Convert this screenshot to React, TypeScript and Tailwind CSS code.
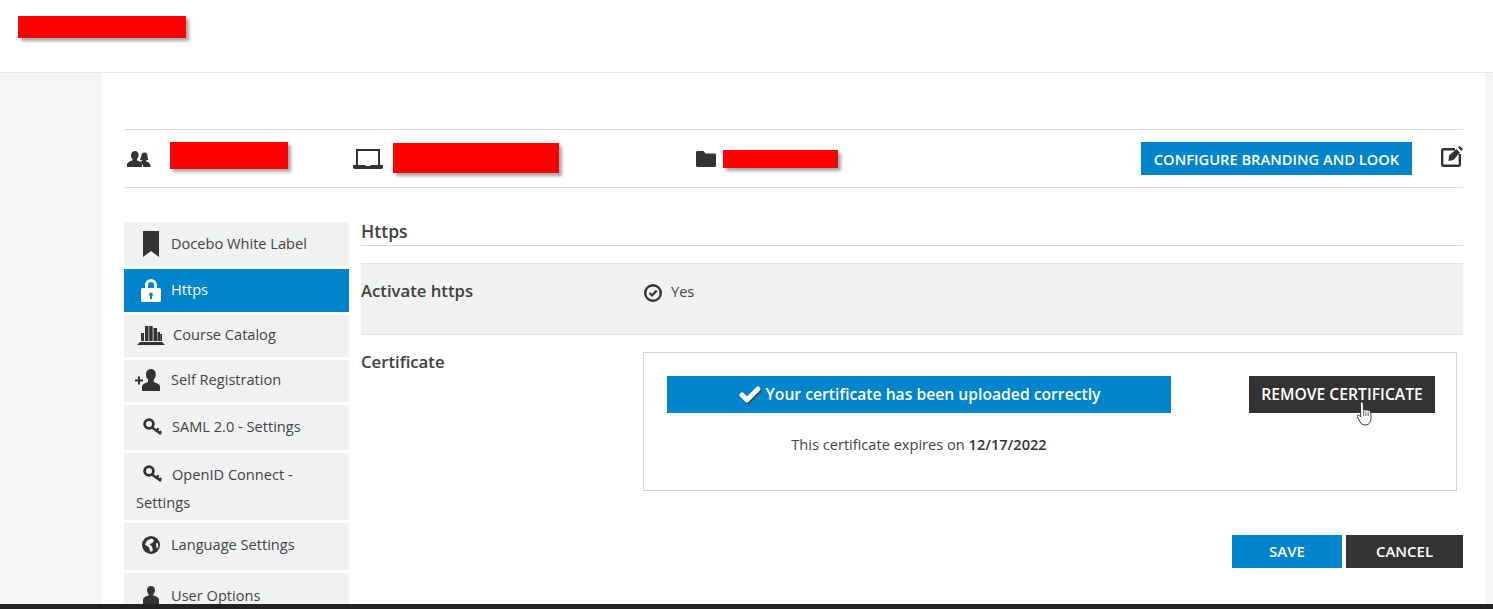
import { Check } from "lucide-react";
import type { ReactNode } from "react";

const Redacted = ({ className }: { className: string }) => (
    <div className={`bg-[#ff0000] shadow-[3px_3px_3px_rgba(0,0,0,0.35)] ${className}`} />
);

const UsersIcon = () => (
    <svg viewBox="0 0 24 16" className="h-[16px] w-[24px] fill-[#333]">
        <path d="M8 0c2.400 0 3.600 1.900 3.600 4.200 0 1.700-.7 3-1.600 3.800v1.400c2.500.7 4.600 1.800 5 3.600v3H0v-3c.4-1.800 2.600-2.900 5.500-3.600V8C4.600 7.200 4 5.900 4 4.200 4 1.900 5.600 0 8 0z" />
        <path d="M17.500 1.500c2 0 3 1.700 3 3.500 0 1.500.4 2.700 1 3.500-.6.500-1.700.8-2.600.9v.9c2 .5 4.500 1.600 4.800 5.700h-7.400c-.3-2.400-1.500-3.800-3.500-4.900.5-.4 1.700-.8 2.500-1v-.7c-.9-.1-2-.4-2.600-.9.800-.8 1.300-2 1.500-3.600.2-1.700 1.300-3.400 3.300-3.400z" />
    </svg>
);

const LaptopIcon = () => (
    <svg viewBox="0 0 30 20" className="h-[20px] w-[30px] fill-[#333]">
        <path d="M3 0h24v16h-2V2H5v14H3z" />
        <path d="M0 16h12l1 1h4l1-1h12v2.500l-1 1.500H1l-1-1.500z" />
    </svg>
);

const FolderIcon = () => (
    <svg viewBox="0 0 20 16" className="h-[16px] w-[20px] fill-[#333]">
        <path d="M1.500 0h6l2 2.500h9c.8 0 1.500.7 1.500 1.500v10.500c0 .8-.7 1.500-1.500 1.500h-17C.7 16 0 15.300 0 14.500v-13C0 .7.700 0 1.500 0z" />
    </svg>
);

const EditIcon = () => (
    <svg viewBox="0 0 22 21" className="h-[21px] w-[22px]">
        <path d="M14 3.200H2.500c-.7 0-1.300.6-1.300 1.300v14c0 .7.600 1.300 1.300 1.300h15c.7 0 1.300-.6 1.300-1.300V8" fill="none" stroke="#333" strokeWidth="2.400" />
        <path d="M8 9.500 15.500 3l3.500 3.500-6.500 7.500-5 1zM17 1.500l1.500-1.500L22 3l-1.500 2z" fill="#333" />
    </svg>
);

const BookmarkIcon = () => (
    <svg viewBox="0 0 16 26" className="h-[26px] w-[16px] fill-[#333]">
        <path d="M0 0h16v26l-8-6-8 6z" />
    </svg>
);

const LockIcon = () => (
    <svg viewBox="0 0 20 24" className="h-[24px] w-[20px]">
        <path d="M4 10V7a6 6 0 0 1 12 0v3h-3V7a3 3 0 0 0-6 0v3z" fill="#fff" />
        <path d="M1.500 10h17c.8 0 1.500.7 1.500 1.500v11c0 .8-.7 1.500-1.500 1.500h-17C.7 24 0 23.300 0 22.500v-11C0 10.700.7 10 1.500 10z" fill="#fff" />
        <path d="M10 14.500a2 2 0 0 1 1 3.700V21H9v-2.800a2 2 0 0 1 1-3.700z" fill="#0084cb" />
    </svg>
);

const BooksIcon = () => (
    <svg viewBox="0 0 28 20" className="h-[20px] w-[28px] fill-[#333]">
        <path d="M0 20l3-3h22l3 3z" />
        <path d="M4 8h3v8H4zM8 1h3.500v15H8zM12.200 1h3.500v15h-3.500zM16.500 3H20v13h-3.500zM20.500 7H23v9h-2.500zM23.200 9h1.800v7h-1.800z" />
    </svg>
);

const AddUserIcon = () => (
    <svg viewBox="0 0 25 22" className="h-[22px] w-[25px] fill-[#333]">
        <path d="M0 10.500h3v-3h2v3h3v2H5v3H3v-3H0z" />
        <path d="M16 0c3 0 4.800 2.300 4.800 5.500 0 2.200-.8 4-2 5v2.500c2.600.8 5.200 1.800 6.200 4V22H7v-5c1-2.200 3.400-3.200 6-4v-2.500c-1.200-1-2-2.800-2-5C11 2.300 13 0 16 0z" />
    </svg>
);

const KeyIcon = () => (
    <svg viewBox="0 0 20 18" className="h-[18px] w-[20px]">
        <circle cx="6" cy="6" r="4.400" fill="none" stroke="#333" strokeWidth="2.800" />
        <path d="M9 9.500l9 6.500M13.500 12.700l2-2.500M16.500 15l1.500-2" fill="none" stroke="#333" strokeWidth="2.400" />
    </svg>
);

const GlobeIcon = () => (
    <svg viewBox="0 0 18 18" className="h-[18px] w-[18px]">
        <circle cx="9" cy="9" r="9" fill="#333" />
        <path d="M5 4.500 9.500 2.500 12 4l-1.500 3-3 1 2.500 2.500 1 4L8.500 16 7 11.500 3 8.500zM14 7l2 .5.300 3.500-1.800 1.500z" fill="#f0f1f1" />
    </svg>
);

const UserIcon = () => (
    <svg viewBox="0 0 16 18" className="h-[18px] w-[16px] fill-[#333]">
        <path d="M8 0c2.500 0 4 1.900 4 4.300 0 1.700-.7 3.100-1.700 4v1.200c2.400.6 5.700 1.600 5.700 4.500v4H0v-4c0-2.900 3.300-3.900 5.700-4.500V8.300c-1-.9-1.700-2.300-1.700-4C4 1.900 5.500 0 8 0z" />
    </svg>
);

const CheckCircleIcon = () => (
    <svg viewBox="0 0 18 18" className="h-[18px] w-[18px]">
        <circle cx="9" cy="9" r="7.800" fill="none" stroke="#333" strokeWidth="2.400" />
        <path d="M5.500 9l2.600 2.500L12.700 6.500" fill="none" stroke="#333" strokeWidth="2.200" />
    </svg>
);

const HandCursor = () => (
    <svg viewBox="0 0 16 25" className="h-[25px] w-[16px]">
        <path
            d="M4 1.500c.8-.8 2-.5 2.200.7l.3 7c.8-.6 1.800-.6 2.300.1.800-.5 1.800-.4 2.300.3.800-.4 1.900-.1 2.200.8.600 2.200 1 5.500.6 8-.4 2.600-1.800 5.400-4.900 5.600-2.900.2-4.700-.9-5.900-3.100-.9-1.600-2.100-3.700-2.900-5.200-.5-1 .9-2.200 2.100-1.200l1.400 1.400L3.400 2.800c0-.5.200-1 .6-1.300z"
            fill="#fff"
            stroke="#333"
            strokeWidth="1"
        />
        <path d="M6.600 10v5M8.900 10.500v4.500M11.200 11v4" fill="none" stroke="#333" strokeWidth="0.800" />
    </svg>
);

type SideItem = { label: ReactNode; icon: ReactNode; box: string; active?: boolean };

const sideItems: SideItem[] = [
    { label: "Docebo White Label", icon: <BookmarkIcon />, box: "h-[44px] pl-[19px] gap-[12px]" },
    { label: "Https", icon: <LockIcon />, box: "h-[43px] pl-[17px] gap-[10px] pb-[2px]", active: true },
    { label: "Course Catalog", icon: <BooksIcon />, box: "h-[42px] pl-[13px] gap-[8px] pb-[2px]" },
    { label: "Self Registration", icon: <AddUserIcon />, box: "h-[42px] pl-[11px] gap-[11px] pb-[2px]" },
    { label: "SAML 2.0 - Settings", icon: <KeyIcon />, box: "h-[45px] pl-[19px] gap-[9px] pb-[2px]" },
];

const SideRow = ({ item }: { item: SideItem }) => (
    <div
        className={`flex items-center text-[14.6px] ${item.box} ${
            item.active ? "bg-[#0084cb] text-white" : "bg-[#f0f1f1] text-[#444]"
        }`}
    >
        {item.icon}
        <span>{item.label}</span>
    </div>
);

const Sidebar = () => (
    <div className="flex w-[225px] shrink-0 flex-col gap-[3px]">
        {sideItems.map((item, i) => (
            <SideRow key={i} item={item} />
        ))}
        <div className="h-[67px] bg-[#f0f1f1] pl-[12px] pt-[7px] text-[14.6px] leading-[28px] text-[#444]">
            <div className="flex items-center gap-[9px] pl-[7px]">
                <KeyIcon />
                <span>OpenID Connect -</span>
            </div>
            <div>Settings</div>
        </div>
        <div className="flex h-[47px] items-center gap-[11px] bg-[#f0f1f1] pb-[3px] pl-[18px] text-[14.6px] text-[#444]">
            <GlobeIcon />
            <span>Language Settings</span>
        </div>
        <div className="flex h-[31px] items-start gap-[12px] bg-[#f0f1f1] pl-[19px] pt-[13px] text-[14.6px] leading-[18px] text-[#444]">
            <UserIcon />
            <span>User Options</span>
        </div>
    </div>
);

const MainPanel = () => (
    <div className="min-w-0 flex-1 pl-[12px]">
        <div className="h-[24px] border-b border-[#d9d9d9] text-[17.6px] font-semibold leading-[18px] text-[#404040]">
            Https
        </div>
        <div className="mt-[17px] flex h-[72px] border-y border-[#e4e4e4] bg-[#f0f1f1]">
            <div className="w-[283px] pt-[16px] text-[16.7px] font-semibold leading-[22px] text-[#404040]">
                Activate https
            </div>
            <div className="flex items-start gap-[9px] pt-[18px] text-[14.6px] leading-[18px] text-[#444]">
                <span className="pt-[2px]">
                    <CheckCircleIcon />
                </span>
                Yes
            </div>
        </div>
        <div className="mt-[16px] flex">
            <div className="w-[282px] text-[16.7px] font-semibold leading-[22px] text-[#404040]">Certificate</div>
            <div className="mr-[6px] mt-[1px] h-[139px] flex-1 border border-[#d4d4d4] pl-[23px] pr-[21px] pt-[23px]">
                <div className="flex justify-between">
                    <div className="flex h-[37px] w-[504px] items-center justify-center gap-[4px] bg-[#0084cb] pt-[1px] text-[15.7px] font-semibold text-white">
                        <Check size={24} strokeWidth={5} className="text-white drop-shadow-[1px_1px_0_#333]" />
                        Your certificate has been uploaded correctly
                    </div>
                    <div className="relative flex h-[37px] w-[186px] items-center justify-center bg-[#333] pt-[1px] text-[15.7px] font-semibold text-white">
                        REMOVE CERTIFICATE
                        <span className="absolute left-[108px] top-[25px]">
                            <HandCursor />
                        </span>
                    </div>
                </div>
                <div className="mt-[21px] w-[504px] text-center text-[14.6px] leading-[20px] text-[#444]">
                    This certificate expires on <span className="font-semibold text-[#333]">12/17/2022</span>
                </div>
            </div>
        </div>
        <div className="mt-[44px] flex justify-end gap-[4px]">
            <div className="flex h-[33px] w-[110px] items-center justify-center bg-[#0084cb] text-[15px] font-semibold text-white">
                SAVE
            </div>
            <div className="flex h-[33px] w-[117px] items-center justify-center bg-[#333] text-[15px] font-semibold text-white">
                CANCEL
            </div>
        </div>
    </div>
);

export default function App() {
    return (
        <div className="flex h-[609px] flex-col overflow-hidden bg-[#f5f5f5] font-['Open_Sans',sans-serif]">
            <div className="h-[73px] shrink-0 border-b border-[#e8e8e8] bg-white pl-[18px] pt-[16px]">
                <Redacted className="h-[22px] w-[168px]" />
            </div>
            <div className="min-h-0 flex-1 overflow-hidden pl-[102px] pr-[8px]">
                <div className="h-full overflow-hidden bg-white px-[22px] pt-[56px]">
                    <div className="flex h-[59px] items-center border-y border-[#dcdcdc]">
                        <div className="flex w-[229px] items-center pl-[3px]">
                            <UsersIcon />
                            <Redacted className="mb-[7px] ml-[19px] h-[27px] w-[118px]" />
                        </div>
                        <div className="flex w-[343px] items-center">
                            <LaptopIcon />
                            <Redacted className="mb-[2px] ml-[10px] h-[30px] w-[166px]" />
                        </div>
                        <div className="flex flex-1 items-center">
                            <FolderIcon />
                            <Redacted className="ml-[7px] h-[18px] w-[115px]" />
                        </div>
                        <div className="flex h-[33px] w-[271px] items-center justify-center bg-[#0084cb] pt-[1px] text-[14.7px] font-semibold text-white">
                            CONFIGURE BRANDING AND LOOK
                        </div>
                        <div className="mb-[4px] ml-[29px]">
                            <EditIcon />
                        </div>
                    </div>
                    <div className="mt-[34px] flex">
                        <Sidebar />
                        <MainPanel />
                    </div>
                </div>
            </div>
            <div className="h-[5px] shrink-0 bg-[#222]" />
        </div>
    );
}
